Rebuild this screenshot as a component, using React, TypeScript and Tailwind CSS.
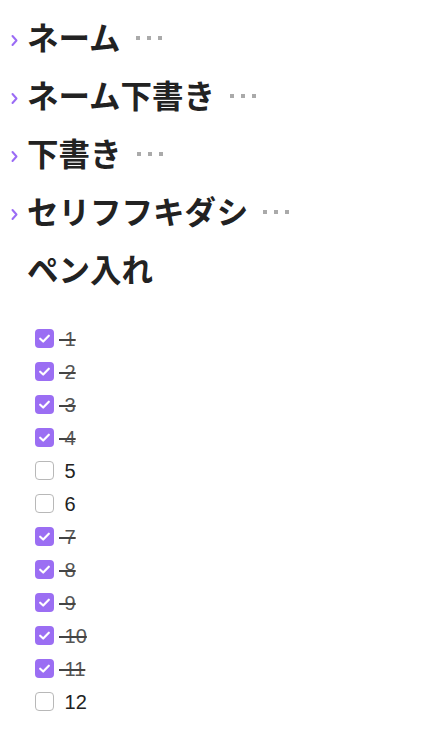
const headings = [
  { title: 'ネーム', folded: true },
  { title: 'ネーム下書き', folded: true },
  { title: '下書き', folded: true },
  { title: 'セリフフキダシ', folded: true },
  { title: 'ペン入れ', folded: false },
]

const tasks = [
  { label: '1', done: true },
  { label: '2', done: true },
  { label: '3', done: true },
  { label: '4', done: true },
  { label: '5', done: false },
  { label: '6', done: false },
  { label: '7', done: true },
  { label: '8', done: true },
  { label: '9', done: true },
  { label: '10', done: true },
  { label: '11', done: true },
  { label: '12', done: false },
]

const Chevron = () => (
  <svg width="8" height="13" viewBox="0 0 8 13" fill="none">
    <path d="M2.5 2 L6.5 6.5 L2.5 11" stroke="#9b6cf5" strokeWidth={2} strokeLinecap="round" strokeLinejoin="round" />
  </svg>
)

const Check = () => (
  <svg width="13" height="13" viewBox="0 0 12 12" fill="none">
    <path d="M2 6.2 L4.8 8.8 L10 3.4" stroke="white" strokeWidth={2} strokeLinecap="round" strokeLinejoin="round" />
  </svg>
)

export default function App() {
  return (
    <div className="min-h-screen bg-white text-[#222] font-['Liberation_Sans','Noto_Sans_CJK_JP',sans-serif]">
      <div className="pt-[11px]">
        {headings.map((h) => (
          <div key={h.title} className="flex items-center h-[58px]">
            <div className="w-[27px] flex justify-end pr-[9px]">{h.folded && <Chevron />}</div>
            <span className="text-[31.5px] font-bold leading-none tracking-normal">{h.title}</span>
            {h.folded && (
              <span className="ml-[15px] -mt-[4px] flex gap-[7px]">
                <span className="w-[4px] h-[4px] bg-[#aaaaaa]" />
                <span className="w-[4px] h-[4px] bg-[#aaaaaa]" />
                <span className="w-[4px] h-[4px] bg-[#aaaaaa]" />
              </span>
            )}
          </div>
        ))}
      </div>

      <ul className="mt-[21px] pl-[35px]">
        {tasks.map((t) => (
          <li key={t.label} className="flex items-center h-[33px]">
            {t.done ? (
              <span className="w-[19px] h-[19px] rounded-[4px] bg-[#9b6ef3] flex items-center justify-center">
                <Check />
              </span>
            ) : (
              <span className="w-[19px] h-[19px] rounded-[4px] border border-[#b8b8b8] bg-white" />
            )}
            <span
              className={
                t.done
                  ? 'ml-[5px] text-[20px] leading-none whitespace-pre line-through text-[#555] decoration-[#444]'
                  : 'ml-[5px] text-[20px] leading-none whitespace-pre text-[#222]'
              }
            >
              {' ' + t.label}
            </span>
          </li>
        ))}
      </ul>
    </div>
  )
}
